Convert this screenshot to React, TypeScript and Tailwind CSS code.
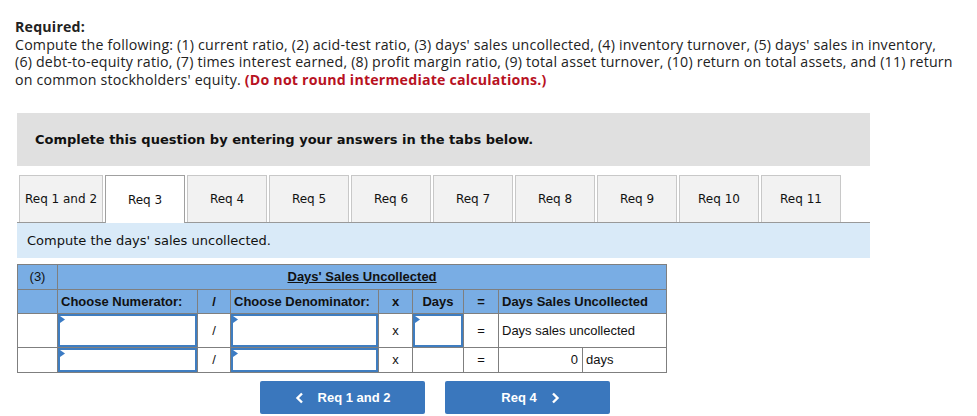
import React from "react";

const tabs = ["Req 1 and 2", "Req 3", "Req 4", "Req 5", "Req 6", "Req 7", "Req 8", "Req 9", "Req 10", "Req 11"];

function Tri() {
  return (
    <svg className="absolute left-0 top-0" width="5" height="7" viewBox="0 0 5 7">
      <path d="M0 0 L5 3.5 L0 7 Z" fill="#3b7bc4" />
    </svg>
  );
}

function Input() {
  return (
    <div className="relative h-full w-full border-2 border-[#3f7dc0] bg-white">
      <Tri />
    </div>
  );
}

function Chev({ left }: { left?: boolean }) {
  return (
    <svg width="9" height="12" viewBox="0 0 9 12">
      <path d={left ? "M7 1.5 L2.5 6 L7 10.5" : "M2 1.5 L6.5 6 L2 10.5"} fill="none" stroke="white" strokeWidth="2.4" />
    </svg>
  );
}

export default function App() {
  const td = "border border-[#7f7f7f] p-0";
  return (
    <div className="bg-white w-[977px] h-[416px] overflow-hidden pl-[15px] pt-[18px]">
      <div className="font-['Open_Sans',sans-serif] text-[14.2px] tracking-[0.2px] leading-[17.5px] text-[#222] whitespace-nowrap">
        <div className="font-bold">Required:</div>
        <div>
          Compute the following: (1) current ratio, (2) acid-test ratio, (3) days' sales uncollected, (4) inventory turnover, (5) days' sales in inventory,
          <br />
          (6) debt-to-equity ratio, (7) times interest earned, (8) profit margin ratio, (9) total asset turnover, (10) return on total assets, and (11) return
          <br />
          on common stockholders' equity. <span className="font-bold text-[#b8121f]">(Do not round intermediate calculations.)</span>
        </div>
      </div>

      <div className="ml-[2px] w-[853px]">
        <div className="mt-[25px] h-[53px] bg-[#e0e0e0] flex items-center pl-[18px] font-['DejaVu_Sans',Verdana,sans-serif] font-bold text-[13px] text-[#111]">
          Complete this question by entering your answers in the tabs below.
        </div>

        <div className="mt-[9px] flex items-end gap-[2px] pl-[2px] border-b border-[#999] h-[48px]">
          {tabs.map((t, i) => (
            <div
              key={t}
              className={
                "h-[47px] flex items-center justify-center font-['DejaVu_Sans',Verdana,sans-serif] text-[12px] text-[#111] " +
                (i === 0 ? "w-[84px] " : "w-[80px] ") +
                (i === 1
                  ? "bg-white border border-b-0 border-[#a0a0a0] -mb-px h-[48px]"
                  : "bg-[#f2f2f2] border border-b-0 border-[#c8c8c8]")
              }
            >
              {t}
            </div>
          ))}
        </div>

        <div className="h-[35px] bg-[#d9eaf8] flex items-center pl-[10px] font-['DejaVu_Sans',Verdana,sans-serif] text-[13px] text-[#111]">
          Compute the days' sales uncollected.
        </div>

        <table className="mt-[6px] border-collapse font-['Liberation_Sans',Arial,sans-serif] text-[13px] text-[#111] table-fixed w-[649px]">
          <colgroup>
            <col className="w-[40px]" />
            <col className="w-[140px]" />
            <col className="w-[33px]" />
            <col className="w-[148px]" />
            <col className="w-[34px]" />
            <col className="w-[51px]" />
            <col className="w-[35px]" />
            <col className="w-[84px]" />
            <col className="w-[84px]" />
          </colgroup>
          <tbody>
            <tr className="h-[25px] bg-[#79ade4]">
              <td className={td + " text-center"}>(3)</td>
              <td colSpan={8} className={td + " text-center font-bold underline"}>
                Days' Sales Uncollected
              </td>
            </tr>
            <tr className="h-[24px] bg-[#79ade4] font-bold">
              <td className={td}></td>
              <td className={td + " pl-[3px]"}>Choose Numerator:</td>
              <td className={td + " text-center"}>/</td>
              <td className={td + " pl-[3px]"}>Choose Denominator:</td>
              <td className={td + " text-center"}>x</td>
              <td className={td + " text-center"}>Days</td>
              <td className={td + " text-center"}>=</td>
              <td colSpan={2} className={td + " pl-[3px]"}>Days Sales Uncollected</td>
            </tr>
            <tr className="h-[34px]">
              <td className={td}></td>
              <td className={td + " h-[34px]"}><Input /></td>
              <td className={td + " text-center"}>/</td>
              <td className={td + " h-[34px]"}><Input /></td>
              <td className={td + " text-center"}>x</td>
              <td className={td + " h-[34px]"}><Input /></td>
              <td className={td + " text-center"}>=</td>
              <td colSpan={2} className={td + " pl-[3px]"}>Days sales uncollected</td>
            </tr>
            <tr className="h-[25px]">
              <td className={td}></td>
              <td className={td + " h-[25px]"}><Input /></td>
              <td className={td + " text-center"}>/</td>
              <td className={td + " h-[25px]"}><Input /></td>
              <td className={td + " text-center"}>x</td>
              <td className={td}></td>
              <td className={td + " text-center"}>=</td>
              <td className={td + " text-right pr-[4px]"}>0</td>
              <td className={td + " pl-[3px]"}>days</td>
            </tr>
          </tbody>
        </table>

        <div className="mt-[8px] flex gap-[20px] pl-[243px] font-['Liberation_Sans',Arial,sans-serif] font-bold text-[13px] text-white">
          <div className="w-[165px] h-[33px] rounded-[2px] bg-[#3a77bd] flex items-center justify-center gap-[14px]">
            <Chev left />
            <span>Req 1 and 2</span>
          </div>
          <div className="w-[165px] h-[33px] rounded-[2px] bg-[#3a77bd] flex items-center justify-center gap-[14px] pl-[6px]">
            <span>Req 4</span>
            <Chev />
          </div>
        </div>
      </div>
    </div>
  );
}
